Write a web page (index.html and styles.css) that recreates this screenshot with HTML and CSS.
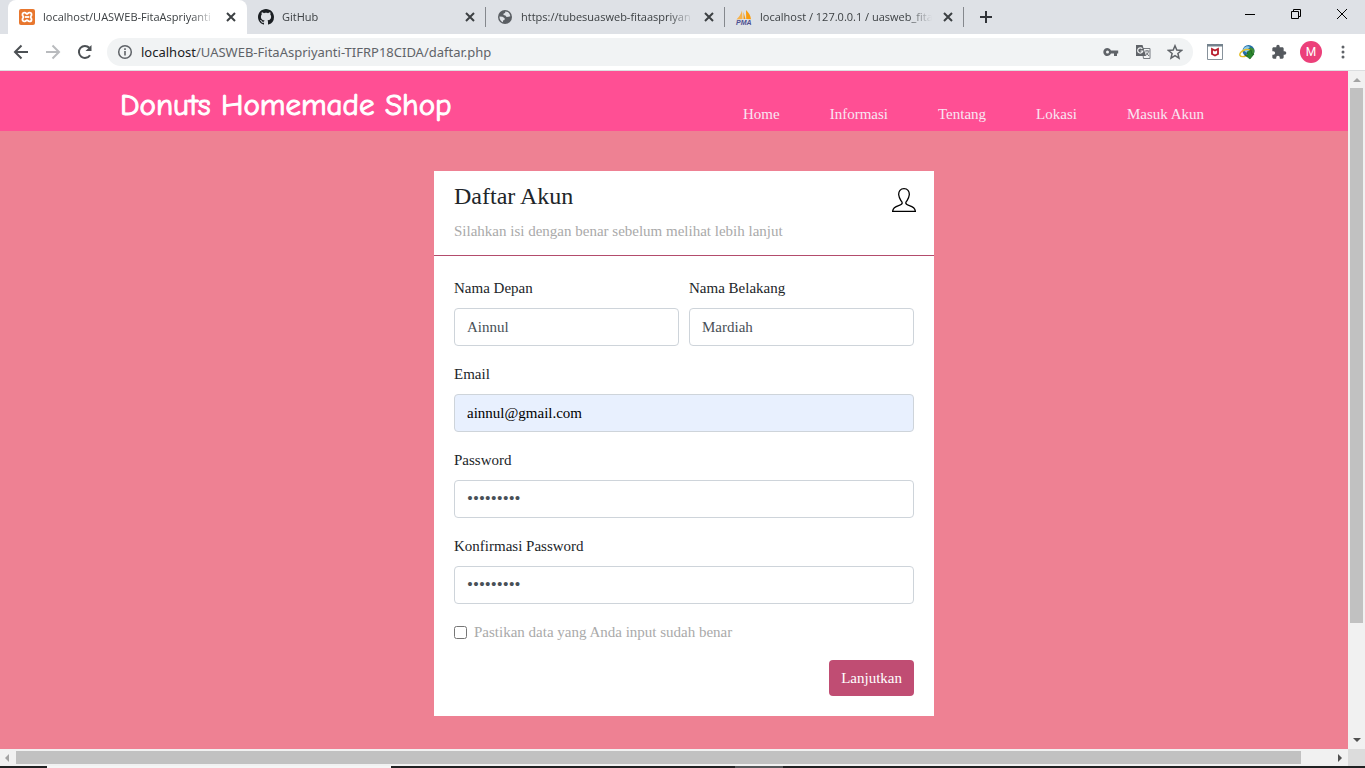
FILE: index.html
```html
<!DOCTYPE html>
<html lang="id">
<head>
<meta charset="utf-8">
<meta name="viewport" content="width=device-width, initial-scale=1">
<title>Daftar Akun</title>
<link rel="stylesheet" href="styles.css">
</head>
<body>
<div class="tabstrip">
  <div class="tab tab-active">
    <svg class="favicon" viewBox="0 0 16 16"><rect width="16" height="16" rx="2" fill="#e8772e"/><path d="M5.2 3.6h.6c1.3 0 1.3 1.3 2.2 1.3s.9-1.300 2.200-1.300h.6a1.700 1.700 0 0 1 1.700 1.700v.6c0 1.200-1 1.200-1 2.100s1 .9 1 2.100v.6a1.700 1.700 0 0 1-1.700 1.700h-.6c-1.300 0-1.300-1.300-2.200-1.300s-.9 1.300-2.200 1.300h-.6a1.700 1.700 0 0 1-1.700-1.700v-.6c0-1.200 1-1.200 1-2.100s-1-.9-1-2.100v-.6a1.700 1.700 0 0 1 1.700-1.700z" fill="none" stroke="#fff" stroke-width="1.800"/><path d="M6 8h4" stroke="#fff" stroke-width="1.800"/></svg>
    <span class="tab-title">localhost/UASWEB-FitaAspriyanti</span>
    <button class="tab-close" aria-label="Tutup tab"><svg width="16" height="16" viewBox="0 0 16 16"><path d="M4 4l8 8M12 4l-8 8"/></svg></button>
  </div>
  <div class="tab">
    <svg class="favicon" viewBox="0 0 16 16"><path fill="#1b1f23" d="M8 0C3.580 0 0 3.580 0 8c0 3.540 2.290 6.530 5.470 7.590.4.070.55-.17.55-.38 0-.19-.01-.82-.01-1.490-2.010.37-2.530-.49-2.690-.94-.09-.23-.48-.94-.82-1.130-.28-.15-.68-.52-.01-.53.63-.01 1.080.58 1.230.82.72 1.210 1.870.87 2.330.66.070-.52.28-.87.51-1.070-1.780-.2-3.640-.89-3.640-3.950 0-.87.31-1.590.82-2.150-.08-.2-.36-1.020.08-2.120 0 0 .67-.21 2.200.82.64-.18 1.320-.27 2-.27s1.360.09 2 .27c1.530-1.040 2.200-.82 2.200-.82.44 1.100.16 1.920.08 2.120.51.56.82 1.270.82 2.150 0 3.070-1.870 3.750-3.650 3.950.29.25.54.73.54 1.480 0 1.070-.01 1.930-.01 2.200 0 .21.15.46.55.38A8.010 8.010 0 0 0 16 8c0-4.420-3.580-8-8-8z"/></svg>
    <span class="tab-title">GitHub</span>
    <button class="tab-close" aria-label="Tutup tab"><svg width="16" height="16" viewBox="0 0 16 16"><path d="M4 4l8 8M12 4l-8 8"/></svg></button>
  </div>
  <div class="tab">
    <svg class="favicon" viewBox="0 0 16 16"><circle cx="8" cy="8" r="7" fill="#5a5e63"/><path fill="#dee1e6" d="M2.500 7.500l3 .3 2.200 1.400-.2 1.800-1.500.6v1.600C3.800 12.600 2.300 10.300 2.500 7.500zM8.300 2.600c2 0 3.300.9 4.200 2.200l.9 2.400-1.800.6-2 .3-1.200-1.600-2-.6.2-1.500 1.500-.3z"/></svg>
    <span class="tab-title">https://tubesuasweb-fitaaspriyan</span>
    <button class="tab-close" aria-label="Tutup tab"><svg width="16" height="16" viewBox="0 0 16 16"><path d="M4 4l8 8M12 4l-8 8"/></svg></button>
  </div>
  <div class="tab">
    <svg class="favicon" viewBox="0 0 16 16"><path d="M6 1.500L6.500 10 0.500 10.500C3 8 5 5 6 1.500z" fill="#f6b24d"/><path d="M7.500 3v7l2 0zM10 1c3 3 4.500 5.500 5 9.200l-4.800-.2z" fill="#f89c0e"/><text x="0" y="16" class="pma">PMA</text></svg>
    <span class="tab-title">localhost / 127.0.0.1 / uasweb_fita</span>
    <button class="tab-close" aria-label="Tutup tab"><svg width="16" height="16" viewBox="0 0 16 16"><path d="M4 4l8 8M12 4l-8 8"/></svg></button>
  </div>
  <button class="new-tab" aria-label="Tab baru"><svg width="16" height="16" viewBox="0 0 16 16"><path d="M8 2v12M2 8h12" stroke="#303338" stroke-width="2"/></svg></button>
  <div class="window-controls">
    <button aria-label="Minimalkan"><svg width="12" height="12" viewBox="0 0 12 12"><path d="M1 6.500h10"/></svg></button>
    <button aria-label="Pulihkan"><svg width="12" height="12" viewBox="0 0 12 12"><path d="M1.500 3.500h7v7h-7zM3.500 3.500v-2h7v7h-2"/></svg></button>
    <button aria-label="Tutup"><svg width="12" height="12" viewBox="0 0 12 12"><path d="M1 1l10 10M11 1L1 11"/></svg></button>
  </div>
</div>

<div class="toolbar">
  <button class="tool" aria-label="Kembali"><svg width="16" height="16" viewBox="0 0 16 16" fill="none" stroke="#4c5054" stroke-width="2"><path d="M15 8H2.500M8.500 1.500L2 8l6.500 6.500"/></svg></button>
  <button class="tool" aria-label="Maju"><svg width="16" height="16" viewBox="0 0 16 16" fill="none" stroke="#b9bbbe" stroke-width="2"><path d="M1 8h12.500M7.500 1.500L14 8l-6.500 6.500"/></svg></button>
  <button class="tool" aria-label="Muat ulang"><svg width="16" height="16" viewBox="0 0 16 16"><path d="M13 11.200A6 6 0 1 1 12.300 3.800" fill="none" stroke="#4c5054" stroke-width="2"/><path d="M14.500 1v6h-6z" fill="#4c5054"/></svg></button>
  <div class="omnibox">
    <svg width="16" height="16" viewBox="0 0 16 16"><circle cx="8" cy="8" r="6.300" fill="none" stroke="#5f6368" stroke-width="1.500"/><path d="M8 7v4.500M8 4.300v1.700" stroke="#5f6368" stroke-width="1.600"/></svg>
    <span class="url"><b>localhost</b>/UASWEB-FitaAspriyanti-TIFRP18CIDA/daftar.php</span>
    <button class="tool" aria-label="Sandi"><svg width="16" height="16" viewBox="0 0 16 16"><path fill="#5f6368" fill-rule="evenodd" d="M8 6.500h7.200v3H14V12h-3V9.500H8a4 4 0 1 1 0-3zM4.500 6.500a1.500 1.500 0 1 0 0 3 1.500 1.500 0 0 0 0-3z"/></svg></button>
    <button class="tool" aria-label="Terjemahkan"><svg width="16" height="16" viewBox="0 0 16 16" fill="none"><path d="M7 4.500h8v10H8.500z" fill="#f1f3f4" stroke="#777b80"/><path d="M1 1h6.500l3.500 11H1z" fill="#5f6368"/><path d="M7.300 4.800A2.600 2.600 0 1 0 7.800 7H5.500" stroke="#f1f3f4" stroke-width="1.200"/><path d="M10 7h4.500M12 6v1M13.500 7.500c-.5 2-1.500 3.200-3 4M11 8.500l3 3.500" stroke="#6f7378"/></svg></button>
    <button class="tool" aria-label="Tandai"><svg width="16" height="16" viewBox="0 0 16 16"><path d="M8 1.800l1.800 4.300 4.700.4-3.600 3 1.100 4.600L8 11.700l-4 2.400 1.100-4.600-3.600-3 4.700-.4z" fill="none" stroke="#5f6368" stroke-width="1.500"/></svg></button>
  </div>
  <button class="tool" aria-label="WebAdvisor"><svg width="16" height="16" viewBox="0 0 16 16"><path d="M.5.500h15v15H.5z" fill="#fff" stroke="#87929b"/><path d="M0 0h16v2.500H0z" fill="#74828d"/><path d="M5 5L8 6.500 11 5v5L8 11.500 5 10z" fill="none" stroke="#b71c2c" stroke-width="1.800"/></svg></button>
  <button class="tool" aria-label="IDM"><svg width="16" height="16" viewBox="0 0 16 16"><circle cx="9.500" cy="7" r="6" fill="#236da9"/><path d="M5 4c2-2.500 5-2 6-1L9 5l2 3-3 1-4-3z" fill="#8cc9e8"/><path d="M11 3l4 2c1 3 0 6-3 7l-2-4z" fill="#3d8c38"/><ellipse cx="6" cy="9" rx="5.500" ry="3" fill="none" stroke="#e4bf28" stroke-width="1.500" transform="rotate(-25 6 9)"/><path d="M8 8l4-2 1 4h2l-4 5-5-4h3z" fill="#27862c" stroke="#155b1a" stroke-width=".6"/></svg></button>
  <button class="tool" aria-label="Ekstensi"><svg width="16" height="16" viewBox="0 0 24 24"><path fill="#55595e" d="M20.500 11H19V7c0-1.100-.9-2-2-2h-4V3.500a2.500 2.500 0 0 0-5 0V5H4c-1.100 0-2 .9-2 2v3.800h1.500a2.700 2.700 0 0 1 0 5.400H2V20c0 1.100.9 2 2 2h3.800v-1.500a2.700 2.700 0 0 1 5.400 0V22H17c1.100 0 2-.9 2-2v-4h1.500a2.500 2.500 0 0 0 0-5z"/></svg></button>
  <button class="tool" aria-label="Profil"><span class="avatar">M</span></button>
  <button class="tool" aria-label="Menu"><svg width="16" height="16" viewBox="0 0 16 16" fill="#5f6368"><circle cx="8" cy="3" r="1.500"/><circle cx="8" cy="8" r="1.500"/><circle cx="8" cy="13" r="1.500"/></svg></button>
</div>

<div class="viewport">
  <div class="page">
    <header class="site-header">
      <h1 class="brand">Donuts Homemade Shop</h1>
      <nav class="site-nav">
        <a href="#home">Home</a>
        <a href="#informasi">Informasi</a>
        <a href="#tentang">Tentang</a>
        <a href="#lokasi">Lokasi</a>
        <a href="#masuk">Masuk Akun</a>
      </nav>
    </header>
    <main class="content">
      <form class="card">
        <div class="card-header">
          <div>
            <h2>Daftar Akun</h2>
            <p class="muted">Silahkan isi dengan benar sebelum melihat lebih lanjut</p>
          </div>
          <svg class="user-icon" width="24" height="24" viewBox="0 0 24 24"><path d="M.6 23.400h22.800c-.3-3.400-3-4.800-6-5.700-2.600-.8-3.600-1.400-3.600-2.600 0-1.100.7-1.600 1.400-2.800.8-1.300 1.800-3 2.100-5.600.2-3.700-1.800-6-5.300-6S6.500 3 6.700 6.700c.3 2.600 1.300 4.300 2.100 5.600.7 1.200 1.400 1.700 1.400 2.800 0 1.200-1 1.800-3.600 2.600-3 .9-5.700 2.300-6 5.700z"/></svg>
        </div>
        <div class="card-body">
          <div class="row">
            <div class="field"><label for="depan">Nama Depan</label><input id="depan" type="text" value="Ainnul"></div>
            <div class="field"><label for="belakang">Nama Belakang</label><input id="belakang" type="text" value="Mardiah"></div>
          </div>
          <div class="field"><label for="email">Email</label><input id="email" class="autofilled" type="email" value="ainnul@gmail.com"></div>
          <div class="field"><label for="sandi">Password</label><input id="sandi" type="password" value="123456789"></div>
          <div class="field"><label for="konfirmasi">Konfirmasi Password</label><input id="konfirmasi" type="password" value="123456789"></div>
          <div class="check"><input id="benar" type="checkbox"><label for="benar" class="muted">Pastikan data yang Anda input sudah benar</label></div>
          <button class="submit" type="submit">Lanjutkan</button>
        </div>
      </form>
    </main>
  </div>
  <div class="scroll-v">
    <svg width="17" height="17" viewBox="0 0 17 17"><path d="M5 11h8L9 7z" fill="#a3a3a3"/></svg>
    <div class="thumb"></div><div class="track"></div>
    <svg width="17" height="17" viewBox="0 0 17 17"><path d="M5 6h8l-4 4z" fill="#505050"/></svg>
  </div>
</div>
<div class="scroll-h">
  <svg width="16" height="17" viewBox="0 0 16 17"><path d="M9 5v8L5 9z" fill="#a3a3a3"/></svg>
  <div class="thumb"></div><div class="track"></div>
  <svg width="16" height="17" viewBox="0 0 16 17"><path d="M6 5v8l4-4z" fill="#505050"/></svg>
  <div class="corner"></div>
</div>
<div class="taskbar"><span class="task-light"></span><span class="task-grey"></span></div>
</body>
</html>
```
FILE: styles.css
```css
* { box-sizing: border-box; }

body {
  margin: 0;
  min-height: 100vh;
  display: flex;
  flex-direction: column;
  font: 15px/24px "Liberation Serif", "Times New Roman", serif;
  color: #212529;
}

button { border: 0; background: none; padding: 0; font: inherit; }
svg { display: block; flex: none; }
h1, h2, p { margin: 0; font-weight: 400; }

/* Browser tabs */
.tabstrip {
  display: flex;
  height: 34px;
  padding-left: 8px;
  background: #dee1e6;
  font: 11px/16px "Open Sans", "Noto Sans", sans-serif;
  color: #3c4043;
}
.tab {
  display: flex;
  align-items: center;
  flex: 0 1 239px;
  min-width: 0;
  gap: 8px;
  padding: 0 8px 0 11px;
  background: linear-gradient(#85888d, #85888d) right center / 1px 20px no-repeat;
}
.tab-active { background: #fff; border-radius: 8px 8px 0 0; }
.favicon { width: 16px; height: 16px; overflow: visible; }
.pma { font: italic bold 7px "Liberation Sans", sans-serif; fill: #4d4f91; }
.tab-title {
  flex: 1;
  overflow: hidden;
  white-space: nowrap;
  -webkit-mask-image: linear-gradient(to right, #000 calc(100% - 24px), transparent);
  mask-image: linear-gradient(to right, #000 calc(100% - 24px), transparent);
}
.tab-close svg { fill: none; stroke: #3c4043; stroke-width: 2; }
.new-tab { width: 44px; display: grid; place-items: center; }
.window-controls { display: flex; margin-left: auto; padding-bottom: 6px; }
.window-controls button { width: 46px; display: grid; place-items: center; }
.window-controls svg { fill: none; stroke: #000; }

/* Address bar */
.toolbar {
  display: flex;
  align-items: center;
  height: 37px;
  padding: 0 6px 0 5px;
  background: #fff;
  border-bottom: 1px solid #dcdee0;
}
.tool { width: 32px; height: 28px; display: grid; place-items: center; }
.omnibox {
  display: flex;
  align-items: center;
  flex: 1;
  min-width: 0;
  height: 28px;
  margin: 0 6px;
  padding: 0 2px 0 10px;
  border-radius: 14px;
  background: #f1f3f4;
}
.url {
  flex: 1;
  overflow: hidden;
  margin-left: 8px;
  white-space: nowrap;
  font: 13px/20px "Noto Sans", "Open Sans", sans-serif;
  color: #5f6368;
}
.url b { font-weight: 400; color: #202124; }
.avatar {
  width: 22px;
  border-radius: 50%;
  background: #ec407a;
  color: #fff;
  font: 12px/22px Roboto, sans-serif;
}

/* Web page */
.viewport { flex: 1; display: flex; }
.page { flex: 1; min-width: 0; background: #ee8193; }
.site-header {
  display: flex;
  justify-content: space-between;
  align-items: flex-end;
  height: 60px;
  padding: 0 144px 0 120px;
  background: #ff4f94;
}
.brand {
  font: 31px/52px "Comic Sans MS", "Comic Neue", Lato, sans-serif;
  color: #fff;
  -webkit-text-stroke: 1px #fff;
}
.site-nav { display: flex; gap: 50px; padding-bottom: 5px; }
.site-nav a { color: #f8e6f2; text-decoration: none; }
.content { padding: 40px 0 32px 20px; }
.card { width: 500px; max-width: 100%; margin: 0 auto; background: #fff; }
.card-header {
  display: flex;
  justify-content: space-between;
  align-items: flex-start;
  padding: 12px 18px 12px 20px;
  border-bottom: 1px solid #b34c6c;
}
.card-header h2 { font-size: 24px; line-height: 26px; margin-bottom: 10px; }
.muted { color: #aaa; }
.user-icon { margin-top: 5px; fill: none; stroke: #000; stroke-width: 1.3; }
.card-body { display: flex; flex-direction: column; gap: 16px; padding: 20px; }
.row { display: flex; gap: 10px; }
.field { display: flex; flex-direction: column; flex: 1; gap: 8px; min-width: 0; }
.field input {
  width: 100%;
  height: 38px;
  padding: 6px 12px;
  border: 1px solid #ced4da;
  border-radius: 4px;
  background: #fff;
  color: #495057;
  font: inherit;
}
.field input[type="password"] { font-size: 17px; }
.field .autofilled { background: #e8f0fe; color: #000; }
.check { display: flex; align-items: center; gap: 7px; }
.check input { width: 13px; height: 13px; margin: 0; }
.submit {
  align-self: flex-end;
  height: 36px;
  padding: 0 12px;
  border-radius: 4px;
  background: #c04d73;
  color: #fff;
}

/* Scrollbars */
.scroll-v { display: flex; flex-direction: column; width: 17px; background: #f1f1f1; }
.scroll-v .thumb { flex: 535; margin: 0 2px; background: #c1c1c1; }
.scroll-v .track { flex: 109; }
.scroll-h { display: flex; height: 17px; background: #f1f1f1; }
.scroll-h .thumb { flex: 1285; margin: 2px 0; background: #c1c1c1; }
.scroll-h .track { flex: 31; }
.corner { width: 17px; background: #dcdcdc; }

.taskbar { display: flex; gap: 344px; height: 2px; padding-left: 47px; background: #202122; }
.task-light { width: 344px; background: #f5f5f5; }
.task-grey { width: 48px; background: #55585a; }
```
